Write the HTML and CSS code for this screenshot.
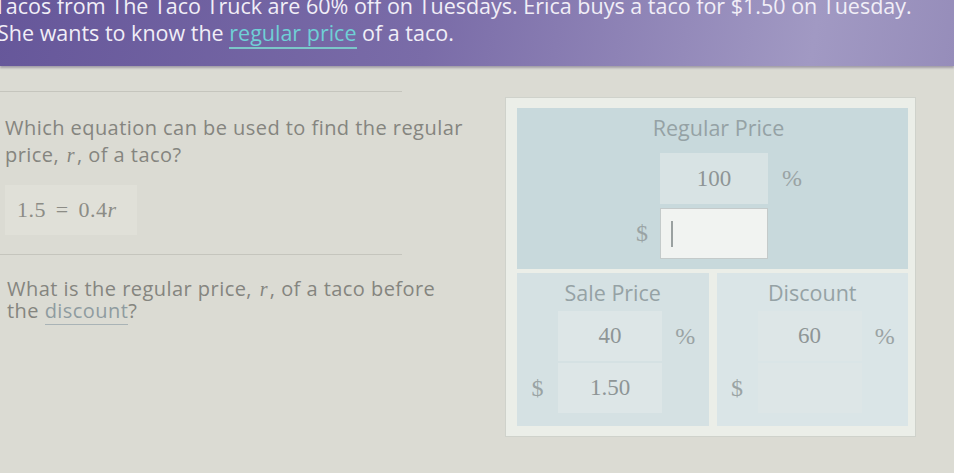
FILE: index.html
```html
<!DOCTYPE html>
<html lang="en">
<head>
  <meta charset="UTF-8" />
  <title>Taco Truck Discount</title>
  <meta name="viewport" content="width=device-width, initial-scale=1.0" />
  <link rel="stylesheet" href="styles.css">
</head>
<body>

  <div class="problem-banner">
    <p>Tacos from The Taco Truck are 60% off on Tuesdays. Erica buys a taco for $1.50 on Tuesday.</p>
    <p>She wants to know the <span class="term">regular price</span> of a taco.</p>
  </div>

  <div class="workspace">
    <div class="questions">
      <div class="question first">
        <p>Which equation can be used to find the regular price, <i class="var">r</i>, of a taco?</p>
        <div class="answer-box">1.5 <span class="op">=</span> 0.4<i>r</i></div>
      </div>
      <div class="question">
        <p>What is the regular price, <i class="var">r</i>, of a taco before the <span class="term-muted">discount</span>?</p>
      </div>
    </div>

    <div class="diagram">
      <div class="regular-block">
        <div class="block-title">Regular Price</div>
        <div class="regular-grid">
          <span></span>
          <div class="value-box">100</div>
          <span class="unit pct">%</span>
          <span class="unit dollar">$</span>
          <div class="value-box entry"><span class="caret"></span></div>
          <span></span>
        </div>
      </div>

      <div class="split">
        <div class="part sale">
          <div class="block-title">Sale Price</div>
          <div class="part-grid">
            <span></span>
            <div class="value-box">40</div>
            <span class="unit">%</span>
            <span class="unit">$</span>
            <div class="value-box">1.50</div>
            <span></span>
          </div>
        </div>
        <div class="part discount">
          <div class="block-title">Discount</div>
          <div class="part-grid">
            <span></span>
            <div class="value-box">60</div>
            <span class="unit">%</span>
            <span class="unit">$</span>
            <div class="value-box"></div>
            <span></span>
          </div>
        </div>
      </div>
    </div>
  </div>

</body>
</html>
```

FILE: styles.css
```css
/* Basic reset */
* {
  margin: 0;
  padding: 0;
  box-sizing: border-box;
}

body {
  font-family: "Open Sans", Lato, sans-serif;
  background: #dbdbd3;
  width: 954px;
  height: 473px;
  overflow: hidden;
}

/* Purple story banner */
.problem-banner {
  height: 66px;
  background: linear-gradient(100deg, #66579a 0%, #7a6ca8 45%, #a199c3 85%, #968dba 100%);
  color: #f1eef7;
  font-size: 21.5px;
  line-height: 27px;
  overflow: hidden;
  box-shadow: 0 2px 2px rgba(60, 50, 90, 0.35);
}

.problem-banner p {
  white-space: nowrap;
  margin-left: -3px;
}

.problem-banner p:first-child {
  margin-top: -8px;
  margin-left: -6px;
}

.term {
  color: #6fd0d6;
  border-bottom: 2px solid #7cc6c9;
}

/* Main area */
.workspace {
  display: flex;
  padding-top: 25px;
}

.questions {
  width: 505px;
}

.question {
  color: #85857f;
  font-size: 20px;
  letter-spacing: 0.45px;
}

.question::before {
  content: "";
  display: block;
  width: 402px;
  border-top: 1px solid #c5c5bd;
}

.question p {
  width: 464px;
}

.question.first {
  padding-bottom: 19px;
  line-height: 27px;
}

.question.first p {
  padding: 22px 0 0 5px;
}

.question:not(.first) p {
  padding: 23px 0 0 7px;
  line-height: 21px;
}

.var {
  font-family: "Liberation Serif", serif;
  padding: 0 2px;
}

.term-muted {
  color: #8f9ba0;
  border-bottom: 1px solid #a9b3b6;
}

.answer-box {
  width: 132px;
  height: 50px;
  margin: 16px 0 0 5px;
  padding-left: 12px;
  background: #e0e0d8;
  font-family: "Liberation Serif", serif;
  font-size: 22px;
  line-height: 50px;
  color: #8c8c86;
}

.answer-box .op {
  margin: 0 4px;
}

/* Diagram panel */
.diagram {
  margin-top: 6px;
  width: 411px;
  height: 340px;
  background: #ebeee8;
  border: 1px solid #cfd2cb;
  padding: 10px 7px 9px 11px;
}

.regular-block {
  height: 161px;
  background: #c8d9dc;
  padding-top: 7px;
  padding-left: 12px;
}

.block-title {
  text-align: center;
  font-size: 21.5px;
  color: #95a2a5;
  line-height: 25px;
}

.regular-grid {
  display: grid;
  grid-template-columns: 131px 108px 1fr;
  grid-template-rows: 51px 51px;
  row-gap: 4px;
  margin-top: 13px;
}

.value-box {
  background: #d8e3e4;
  font-family: "Liberation Serif", serif;
  font-size: 23px;
  color: #8e9596;
  display: flex;
  align-items: center;
  justify-content: center;
}

.value-box.entry {
  background: #f1f3f1;
  border: 1px solid #c4caca;
  justify-content: flex-start;
  padding-left: 10px;
}

.caret {
  width: 2px;
  height: 26px;
  background: #9aa0a0;
}

.unit {
  font-family: "Liberation Serif", serif;
  font-size: 24px;
  color: #9aa3a4;
  display: flex;
  align-items: center;
}

.regular-grid .pct {
  padding-left: 14px;
}

.regular-grid .dollar {
  justify-content: flex-end;
  padding-right: 12px;
}

/* Sale price / discount split */
.split {
  display: flex;
  gap: 8px;
  margin-top: 4px;
  height: 153px;
}

.part {
  flex: 1;
  padding-top: 7px;
}

.part.sale {
  background: #d5e1e3;
}

.part.discount {
  background: #dae5e7;
}

.part-grid {
  display: grid;
  grid-template-columns: 41px 104px 1fr;
  grid-template-rows: 50px 50px;
  row-gap: 2px;
  margin-top: 6px;
}

.part-grid .unit {
  justify-content: center;
}

.part .value-box {
  background: #dde6e7;
}
```
